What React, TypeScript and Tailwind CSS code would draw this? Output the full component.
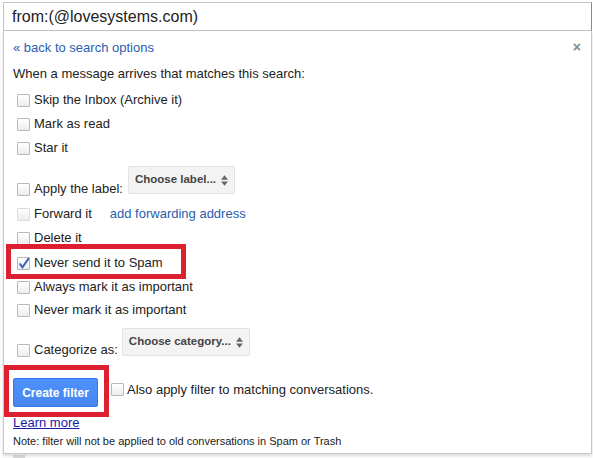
import { ReactNode } from 'react';

function Box({ checked, faint }: { checked?: boolean; faint?: boolean }) {
  return (
    <span
      className={`relative inline-block w-[13px] h-[13px] shrink-0 rounded-[1px] border bg-gradient-to-b from-white to-[#ededed] ${
        faint ? 'border-[#dcdcdc]' : 'border-[#b8b8b8]'
      }`}
    >
      {checked && (
        <svg viewBox="0 0 13 13" className="absolute -left-[1px] -top-[2px] w-[14px] h-[14px]">
          <path d="M2.5 7 L5 10.5 L11 2" fill="none" stroke="#3b5fb0" strokeWidth="1.8" />
        </svg>
      )}
    </span>
  );
}

function Row({ children, checked, faint, className = '' }: { children: ReactNode; checked?: boolean; faint?: boolean; className?: string }) {
  return (
    <div className={`flex items-center h-[24px] pl-[13px] ${className}`}>
      <Box checked={checked} faint={faint} />
      <span className="ml-[4px] text-[13px] text-[#222]">{children}</span>
    </div>
  );
}

function Select({ text, w }: { text: string; w: string }) {
  return (
    <div className={`${w} h-[28px] flex items-center justify-between pl-[6px] pr-[6px] rounded-[2px] border border-[#e2e2e2] bg-[#f3f3f3] text-[11.5px] font-bold text-[#444] whitespace-nowrap`}>
      <span>{text}</span>
      <svg viewBox="0 0 8 12" className="w-[7px] h-[11px] shrink-0">
        <path d="M4 0 L8 5 L0 5 Z M4 12 L8 7 L0 7 Z" fill="#666" />
      </svg>
    </div>
  );
}

export default function App() {
  return (
    <div className="relative w-[593px] h-[458px] overflow-hidden bg-white font-['Liberation_Sans',Arial,sans-serif]">
      {/* search input */}
      <div className="ml-[3px] mt-[2px] w-[589px] h-[29px] border border-[#c4c4c4] border-r-[#4d90fe] flex items-center pl-[8px] text-[16px] text-[#222]">
        from:(@lovesystems.com)
      </div>

      {/* filter panel */}
      <div className="relative ml-[3px] w-[589px] h-[423px] border-x border-b border-[#c8c8c8] shadow-[0_2px_3px_rgba(0,0,0,0.15)] bg-white">
        <span className="absolute right-[10px] top-[6px] text-[14px] font-bold text-[#888]">×</span>

        <div className="pl-[9px] pt-[9px] text-[13px] leading-[16px] text-[#2a5db0]">« back to search options</div>
        <div className="pl-[9px] mt-[10px] text-[13px] leading-[16px] text-[#222]">When a message arrives that matches this search:</div>

        <div className="mt-[6px]">
          <Row>Skip the Inbox (Archive it)</Row>
          <Row>Mark as read</Row>
          <Row>Star it</Row>
        </div>

        <div className="flex items-end pl-[13px] mt-[6px] h-[31px]">
          <div className="flex items-center h-[16px]">
            <Box />
            <span className="ml-[4px] text-[13px] text-[#222]">Apply the label:</span>
          </div>
          <div className="ml-[5px] mb-[3px]">
            <Select text="Choose label..." w="w-[107px]" />
          </div>
        </div>

        <div className="mt-[5px]">
          <div className="flex items-center h-[24px] pl-[13px]">
            <Box faint />
            <span className="ml-[4px] text-[13px] text-[#222]">Forward it</span>
            <span className="ml-[18px] text-[13px] text-[#2a5db0]">add forwarding address</span>
          </div>
          <Row>Delete it</Row>
          <Row checked className="mt-[1px]">Never send it to Spam</Row>
          <Row>Always mark it as important</Row>
          <Row className="-mt-[1px]">Never mark it as important</Row>
        </div>

        <div className="flex items-end pl-[13px] mt-[5px] h-[31px]">
          <div className="flex items-center h-[16px]">
            <Box />
            <span className="ml-[4px] text-[13px] text-[#222]">Categorize as:</span>
          </div>
          <div className="ml-[4px] mb-[2px]">
            <Select text="Choose category..." w="w-[128px]" />
          </div>
        </div>

        <div className="flex items-center mt-[20px] pl-[9px]">
          <button className="w-[85px] h-[29px] rounded-[2px] border border-[#3079ed] bg-gradient-to-b from-[#4d90fe] to-[#4787ed] text-[12px] font-bold text-white">
            Create filter
          </button>
          <div className="flex items-center ml-[13px] -mt-[6px]">
            <Box />
            <span className="ml-[3px] text-[13px] text-[#222]">Also apply filter to matching conversations.</span>
          </div>
        </div>

        <div className="pl-[9px] mt-[8px] text-[13px] leading-[16px] text-[#1a1aa6] underline">Learn more</div>
        <div className="pl-[9px] mt-[3px] text-[11px] leading-[14px] text-[#222]">
          Note: filter will not be applied to old conversations in Spam or Trash
        </div>
      </div>

      {/* partially visible list below */}
      <div className="flex items-start h-[10px] pl-[13px] pt-[1px] bg-white">
        <span className="w-[12px] h-[10px] bg-[#dedede]" />
      </div>

      {/* red annotation boxes */}
      <div className="absolute left-[6px] top-[244px] w-[180px] h-[35px] border-[5px] border-[#dc2030]" />
      <div className="absolute left-[4px] top-[365px] w-[105px] h-[52px] border-[5px] border-[#dc2030]" />
    </div>
  );
}
